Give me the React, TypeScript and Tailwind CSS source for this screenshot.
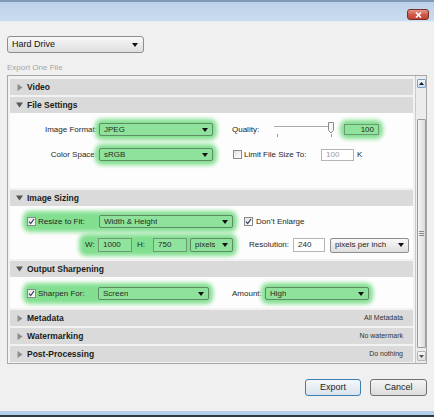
import type { ReactNode } from "react";
import clsx from "clsx";

// marker-style highlight laid behind a group of controls
const GLOW = "flex items-center rounded-[3px] bg-[#82df90] shadow-[0_0_4px_4px_#82df90]";

function DownArrow() {
  return (
    <svg width="6" height="4" viewBox="0 0 6 4" className="shrink-0">
      <path d="M0 0h6L3 4z" fill="#111" />
    </svg>
  );
}

function Select({
  value,
  className,
  green = false,
}: {
  value: string;
  className: string;
  green?: boolean;
}) {
  return (
    <div
      className={clsx(
        "flex items-center justify-between rounded-[2px] border pl-[4px] pr-[4px]",
        green
          ? "border-[#5e8c64] bg-[#8fe29b] text-[#1d2e1f]"
          : "border-[#8e8e8e] bg-linear-to-b from-[#f8f8f8] to-[#dedede]",
        className,
      )}
    >
      <span className="truncate">{value}</span>
      <DownArrow />
    </div>
  );
}

function Field({
  value,
  className,
  green = false,
  muted = false,
}: {
  value: string;
  className: string;
  green?: boolean;
  muted?: boolean;
}) {
  return (
    <div
      className={clsx(
        "flex items-center border px-[4px]",
        green ? "border-[#6c9a72] bg-[#8fe39c]" : "border-[#b3b5ba] bg-white",
        muted && "text-[#9a9a9a]",
        className,
      )}
    >
      {value}
    </div>
  );
}

function Check({ on = false }: { on?: boolean }) {
  return (
    <span className="flex h-[9px] w-[9px] shrink-0 items-center justify-center border border-[#8a8a8a] bg-linear-to-br from-[#e2e2e2] to-white">
      {on && (
        <svg width="7" height="7" viewBox="0 0 7 7">
          <path d="M1 3.6l1.7 2L6 1" fill="none" stroke="#2d3f5c" strokeWidth="1.2" />
        </svg>
      )}
    </span>
  );
}

function QualitySlider() {
  return (
    <svg width="60" height="17" viewBox="0 0 60 17" className="shrink-0">
      <line x1="0" y1="5.5" x2="58" y2="5.5" stroke="#a9a9a9" />
      <line x1="0" y1="6.5" x2="58" y2="6.5" stroke="#ffffff" />
      <line x1="3.5" y1="13" x2="3.5" y2="16" stroke="#9a9a9a" />
      <line x1="57.5" y1="13" x2="57.5" y2="16" stroke="#9a9a9a" />
      <path
        d="M54.5 1.5h5v8l-2.5 2.5l-2.5-2.5z"
        fill="#f6f6f6"
        stroke="#8a8a8a"
        strokeLinejoin="round"
      />
    </svg>
  );
}

function SectionHeader({
  title,
  open = false,
  note,
}: {
  title: string;
  open?: boolean;
  note?: string;
}) {
  return (
    <div className="flex h-[16px] items-center bg-[#dadada] pl-[6px] pr-[10px]">
      <span className="flex w-[7px] items-center justify-center">
        {open ? (
          <svg width="7" height="6" viewBox="0 0 7 6">
            <path d="M0 0.5h7L3.5 5.5z" fill="#555" />
          </svg>
        ) : (
          <svg width="6" height="7" viewBox="0 0 6 7">
            <path d="M0.5 0v7L5.5 3.5z" fill="#8c8c8c" />
          </svg>
        )}
      </span>
      <span className="ml-[4px] text-[8.5px] font-bold text-[#1c1c1c]">{title}</span>
      {note && <span className="ml-auto text-[7px] text-[#333]">{note}</span>}
    </div>
  );
}

function Body({ className, children }: { className: string; children: ReactNode }) {
  return (
    <div className={clsx("flex flex-col bg-[#fdfdfd] text-[8px] text-[#262626]", className)}>
      {children}
    </div>
  );
}

function FileSettings() {
  return (
    <Body className="h-[75px] gap-[12px] pt-[10px]">
      <div className="flex h-[13px] items-center">
        <span className="w-[89px] pr-[2px] text-right">Image Format:</span>
        <div className={GLOW}>
          <Select value="JPEG" green className="h-[13px] w-[114px]" />
        </div>
        <span className="ml-[19px] w-[42px]">Quality:</span>
        <QualitySlider />
        <div className={clsx(GLOW, "ml-[10px]")}>
          <Field value="100" green className="h-[11px] w-[35px] justify-end" />
        </div>
      </div>
      <div className="flex h-[13px] items-center">
        <span className="w-[89px] pr-[2px] text-right">Color Space:</span>
        <div className={GLOW}>
          <Select value="sRGB" green className="h-[13px] w-[114px]" />
        </div>
        <span className="ml-[20px]">
          <Check />
        </span>
        <span className="ml-[2px] w-[77px]">Limit File Size To:</span>
        <Field value="100" muted className="h-[12px] w-[33px]" />
        <span className="ml-[3px]">K</span>
      </div>
    </Body>
  );
}

function ImageSizing() {
  return (
    <Body className="h-[53px] gap-[10px] pt-[9px]">
      <div className="flex h-[13px] items-center pl-[17px]">
        <div className={GLOW}>
          <Check on />
          <span className="ml-[2px] w-[61px]">Resize to Fit:</span>
          <Select value="Width &amp; Height" green className="h-[13px] w-[134px]" />
        </div>
        <span className="ml-[11px]">
          <Check on />
        </span>
        <span className="ml-[3px]">Don’t Enlarge</span>
      </div>
      <div className="flex h-[14px] items-center pl-[73px]">
        <div className={GLOW}>
          <span className="w-[15px] pl-[2px]">W:</span>
          <Field value="1000" green className="h-[14px] w-[34px]" />
          <span className="w-[21px] pl-[5px]">H:</span>
          <Field value="750" green className="h-[14px] w-[34px]" />
          <Select value="pixels" green className="ml-[3px] h-[14px] w-[43px]" />
        </div>
        <span className="ml-[16px] w-[44px]">Resolution:</span>
        <Field value="240" className="h-[14px] w-[32px]" />
        <Select value="pixels per inch" className="ml-[5px] h-[15px] w-[79px]" />
      </div>
    </Body>
  );
}

function OutputSharpening() {
  return (
    <Body className="h-[31px] pt-[10px]">
      <div className="flex h-[13px] items-center pl-[17px]">
        <div className={GLOW}>
          <Check on />
          <span className="ml-[2px] w-[60px]">Sharpen For:</span>
          <Select value="Screen" green className="h-[13px] w-[111px]" />
        </div>
        <span className="ml-[23px] w-[33px]">Amount:</span>
        <div className={GLOW}>
          <Select value="High" green className="h-[13px] w-[104px]" />
        </div>
      </div>
    </Body>
  );
}

function ScrollBar() {
  return (
    <div className="ml-[2px] flex w-[11px] flex-col border-l border-[#c9c9c9] bg-[#ececec] pl-[1px] pt-[3px]">
      <div className="flex h-[9px] w-[9px] items-center justify-center rounded-[1px] border border-[#7fa2c4] bg-linear-to-b from-[#eef5fb] to-[#c9ddef]">
        <svg width="5" height="3" viewBox="0 0 5 3">
          <path d="M0 3h5L2.5 0z" fill="#1a1a1a" />
        </svg>
      </div>
      <div className="mt-[31px] flex h-[229px] w-[9px] items-center justify-center rounded-[1px] border border-[#9b9b9b] bg-linear-to-r from-[#f4f4f4] to-[#dcdcdc]">
        <div className="flex w-[5px] flex-col gap-[1px]">
          <span className="h-px bg-[#8a8a8a]" />
          <span className="h-px bg-[#8a8a8a]" />
          <span className="h-px bg-[#8a8a8a]" />
        </div>
      </div>
      <div className="mt-[3px] flex h-[10px] w-[9px] items-center justify-center rounded-[1px] border border-[#b5b5b5] bg-linear-to-b from-[#f6f6f6] to-[#e0e0e0]">
        <svg width="5" height="3" viewBox="0 0 5 3">
          <path d="M0 0h5L2.5 3z" fill="#555" />
        </svg>
      </div>
    </div>
  );
}

export default function App() {
  return (
    <div className="flex h-[417px] w-[434px] flex-col overflow-hidden bg-[#f0f0f0] font-['Liberation_Sans',Arial,sans-serif] text-[#222]">
      <div className="flex h-[22px] shrink-0 items-start justify-end border-t-2 border-b border-t-[#8299b5] border-b-[#e4edf6] bg-linear-to-b from-[#bcd2ea] to-[#cadcef] pr-[5px] pt-[7px]">
        <div className="flex h-[11px] w-[22px] items-center justify-center rounded-[3px] border border-[#7d2d24] bg-linear-to-b from-[#e5968b] via-[#cf5a4b] to-[#c24132]">
          <svg width="7" height="6" viewBox="0 0 7 6">
            <path d="M1 0.5l5 5M6 0.5l-5 5" stroke="#fff" strokeWidth="1.6" />
          </svg>
        </div>
      </div>

      <div className="flex flex-col px-[7px]">
        <Select
          value="Hard Drive"
          className="mt-[14px] h-[17px] w-[137px] rounded-[3px] pl-[4px] pr-[5px] text-[9px] text-[#111]"
        />
        <div className="mt-[10px] h-[10px] text-[8px] leading-[10px] text-[#a6a6a6]">Export One File</div>

        <div className="mt-[2px] flex h-[289px] border border-[#a8a8a8] bg-[#f2f2f2]">
          <div className="flex w-[405px] flex-col gap-[2px] pl-[2px] pt-[3px]">
            <SectionHeader title="Video" />
            <div>
              <SectionHeader title="File Settings" open />
              <FileSettings />
            </div>
            <div>
              <SectionHeader title="Image Sizing" open />
              <ImageSizing />
            </div>
            <div>
              <SectionHeader title="Output Sharpening" open />
              <OutputSharpening />
            </div>
            <SectionHeader title="Metadata" note="All Metadata" />
            <SectionHeader title="Watermarking" note="No watermark" />
            <SectionHeader title="Post-Processing" note="Do nothing" />
          </div>
          <ScrollBar />
        </div>

        <div className="mt-[15px] flex justify-end gap-[9px] text-[9px] text-[#1e1e1e]">
          <button className="flex h-[17px] w-[56px] items-center justify-center rounded-[3px] border border-[#3c7fb1] bg-linear-to-b from-[#f4f8fb] to-[#d9e3ec]">
            Export
          </button>
          <button className="flex h-[17px] w-[57px] items-center justify-center rounded-[3px] border border-[#707070] bg-linear-to-b from-[#f4f4f4] to-[#dcdcdc]">
            Cancel
          </button>
        </div>
      </div>

      <div className="mt-auto flex h-[6px] shrink-0 flex-col">
        <div className="h-[4px] bg-[#b3cfea]" />
        <div className="h-[2px] bg-[#2c3947]" />
      </div>
    </div>
  );
}
